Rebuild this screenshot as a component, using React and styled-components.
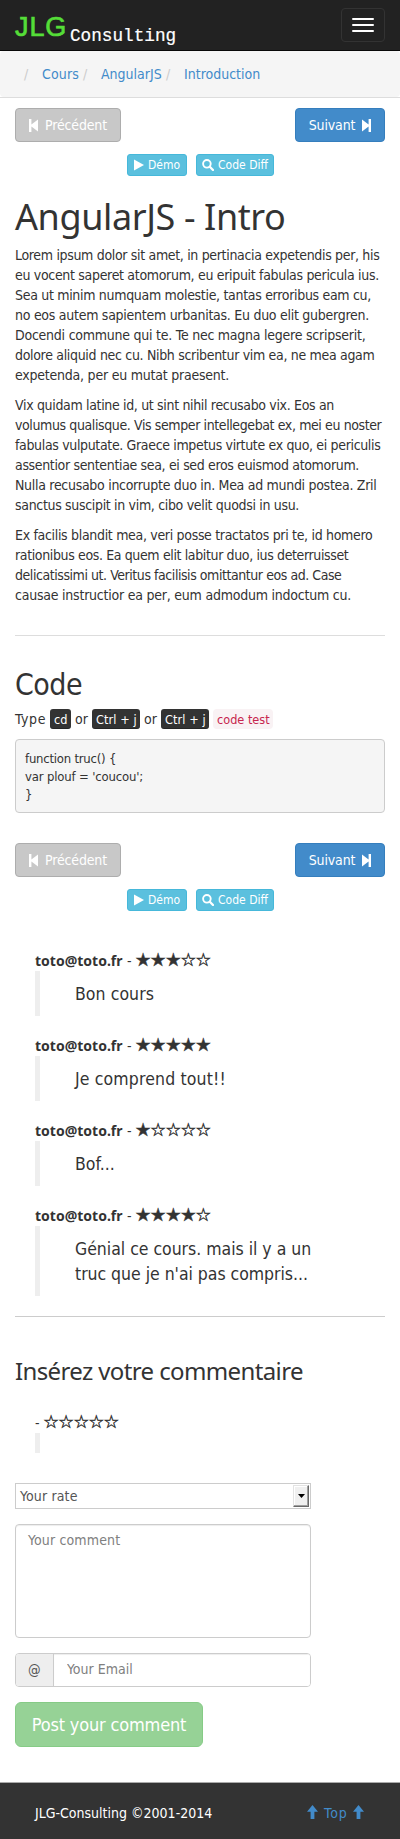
import React from 'react';
import styled, { createGlobalStyle } from 'styled-components';

const sans = '"DejaVu Sans Condensed", "DejaVu Sans", sans-serif';
const noto = '"Noto Sans", sans-serif';

const GlobalStyle = createGlobalStyle`
  *, *::before, *::after { box-sizing: border-box; }
  body { margin: 0; background: #fff; color: #333; font: 14px/20px ${sans}; }
  a { color: #428bca; text-decoration: none; }
  input, textarea, button { font: inherit; }
`;

const Text = styled.span`
  letter-spacing: ${p => p.$ls || 0}px;
  white-space: pre;
`;

const Navbar = styled.header`
  display: flex;
  justify-content: space-between;
  height: 51px;
  padding: 8px 15px 0;
  background: #222;
  border-bottom: 1px solid #080808;
`;

const Logo = styled.a`
  display: flex;
  align-items: flex-start;
  white-space: nowrap;
`;

const LogoName = styled.span`
  width: 55px;
  color: #55dd38;
  font: 27px/38px "Liberation Sans", sans-serif;
  letter-spacing: 0.9px;
  -webkit-text-stroke: 0.7px #55dd38;
`;

const LogoSuffix = styled.span`
  padding-top: 17px;
  color: #fff;
  font: 17.7px/22px "Liberation Mono", monospace;
  -webkit-text-stroke: 0.2px #fff;
`;

const Toggle = styled.button`
  display: flex;
  flex-direction: column;
  gap: 4px;
  width: 44px;
  height: 34px;
  padding: 9px 10px;
  background: transparent;
  border: 1px solid #333;
  border-radius: 4px;
`;

const ToggleBar = styled.span`
  width: 22px;
  height: 2px;
  background: #fff;
  border-radius: 1px;
`;

const BreadcrumbBar = styled.nav`
  height: 47px;
  border-bottom: 1px solid #ddd;
`;

const Breadcrumb = styled.ol`
  display: flex;
  height: 46px;
  margin: 0;
  padding: 13px 15px 0 24px;
  list-style: none;
  background: #f5f5f5;
  border-radius: 4px;
`;

const Crumb = styled.li`
  display: flex;
  width: ${p => p.$w}px;
  &::before { content: "/"; width: 18px; color: #ccc; }
`;

const Container = styled.main`
  padding: 10px 15px 0;
`;

const Pager = styled.div`
  display: flex;
  justify-content: space-between;
`;

const Button = styled.button`
  display: flex;
  align-items: center;
  justify-content: center;
  gap: ${p => p.$gap || 7}px;
  width: ${p => p.$w}px;
  height: ${p => p.$h || 34}px;
  padding: 0;
  color: #fff;
  font-size: ${p => p.$size || 14}px;
  line-height: 20px;
  background: ${p => p.$bg};
  border: 1px solid ${p => p.$line};
  border-radius: ${p => p.$r || 4}px;
`;

const Tools = styled.div`
  display: flex;
  justify-content: center;
  gap: 9px;
  padding: 12px 0 0 1px;
`;

const H1 = styled.h1`
  margin: 21px 0 8px;
  font: 400 36px/40px ${noto};
`;

const H2 = styled.h2`
  margin: 32px 0 7px;
  font: 400 30px/34px ${sans};
`;

const H3 = styled.h3`
  margin: 40px 0 0;
  font: 400 24px/28px ${noto};
`;

const Paragraph = styled.p`
  margin: 0 0 10px;
`;

const Line = styled(Text)`
  display: block;
`;

const Rule = styled.hr`
  height: 1px;
  margin: ${p => p.$top}px 0 0;
  border: 0;
  background: ${p => p.$color};
`;

const CodeRow = styled.div`
  display: flex;
  gap: 4px;
  height: 20px;
`;

const Word = styled(Text)`
  width: ${p => p.$w}px;
`;

const Kbd = styled.kbd`
  width: ${p => p.$w}px;
  padding-left: 4px;
  color: #fff;
  font: 12.6px/21px ${sans};
  letter-spacing: ${p => p.$ls || 0}px;
  white-space: nowrap;
  background: #333;
  border-radius: 3px;
  box-shadow: inset 0 -1px 0 rgba(0, 0, 0, 0.25);
`;

const Code = styled.code`
  width: 60px;
  padding-left: 4px;
  color: #c7254e;
  font: 12.6px/21px ${sans};
  white-space: nowrap;
  background: #f9f2f4;
  border-radius: 4px;
`;

const Pre = styled.pre`
  height: 74px;
  margin: 10px 0 30px;
  padding: 10px 9px 8px;
  font: 13px/18px ${sans};
  background: #f5f5f5;
  border: 1px solid #ccc;
  border-radius: 4px;
`;

const Comments = styled.section`
  display: flex;
  flex-direction: column;
  gap: 20px;
  padding: ${p => p.$top}px 0 0 20px;
`;

const CommentHead = styled.div`
  display: flex;
  height: 20px;
`;

const Author = styled.b`
  width: 92px;
  font: 700 14px/20px ${noto};
`;

const Stars = styled.span`
  padding-left: 1px;
  font: 18px/18px "DejaVu Sans", sans-serif;
  letter-spacing: -1.05px;
  -webkit-text-stroke: 0.4px #333;
`;

const Dash = styled.span`
  width: 7px;
`;

const Quote = styled.blockquote`
  min-height: 20px;
  margin: 0;
  padding: ${p => (p.$empty ? '0' : '11px 0 9px 35px')};
  font-size: 17.5px;
  line-height: 25px;
  border-left: 5px solid #eee;
`;

const Form = styled.form`
  display: flex;
  flex-direction: column;
  gap: 15px;
  width: 296px;
  padding-top: 30px;
`;

const Select = styled.div`
  display: flex;
  justify-content: space-between;
  height: 26px;
  padding: 1px 1px 1px 4px;
  color: #555;
  line-height: 22px;
  border: 1px solid #ccc;
`;

const SelectArrow = styled.span`
  display: flex;
  align-items: center;
  justify-content: center;
  width: 16px;
  height: 22px;
  background: #f0f0f0;
  border: 1px solid;
  border-color: #e3e3e3 #696969 #696969 #e3e3e3;
  box-shadow: inset -1px -1px 0 #a0a0a0, inset 1px 1px 0 #fff;
`;

const TextArea = styled.textarea`
  display: block;
  height: 114px;
  padding: 5px 12px;
  resize: none;
  border: 1px solid #ccc;
  border-radius: 4px;
  box-shadow: inset 0 1px 1px rgba(0, 0, 0, 0.075);
  letter-spacing: 0.15px;
  &::placeholder { color: #808080; }
`;

const InputGroup = styled.div`
  display: flex;
  height: 34px;
  border: 1px solid #ccc;
  border-radius: 4px;
  overflow: hidden;
`;

const Addon = styled.span`
  width: 38px;
  padding-left: 12px;
  color: #555;
  font-size: 14px;
  line-height: 33px;
  background: #eee;
  border-right: 1px solid #ccc;
`;

const Input = styled.input`
  flex: 1;
  min-width: 0;
  padding: 0 13px 3px;
  border: 0;
  box-shadow: inset 0 1px 1px rgba(0, 0, 0, 0.075);
  &::placeholder { color: #808080; }
`;

const Footer = styled.footer`
  display: flex;
  justify-content: space-between;
  height: 57px;
  margin-top: 35px;
  padding: 20px 36px 0 35px;
  color: #fff;
  background: #333;
  border-top: 1px solid #aaa;
`;

const TopLink = styled.a`
  display: flex;
  align-items: flex-start;
  gap: 6px;
  & > svg { margin-top: 2px; }
`;

const StepIcon = ({ flip }) => (
  <svg width="9" height="13" viewBox="0 0 9 13" fill="#fff" transform={flip ? 'scale(-1 1)' : undefined}>
    <path d="M0 0h2.4v5.6L9 0.4v12.2L2.4 7.4V13H0z" />
  </svg>
);

const PlayIcon = () => (
  <svg width="10" height="12" viewBox="0 0 10 12" fill="#fff"><path d="M0 0.5L10 6L0 11.5z" /></svg>
);

const SearchIcon = () => (
  <svg width="12" height="12" viewBox="0 0 12 12" fill="none" stroke="#fff">
    <circle cx="4.9" cy="4.8" r="3.8" strokeWidth="1.9" />
    <path d="M7.8 7.8L11 11" strokeWidth="2.3" strokeLinecap="round" />
  </svg>
);

const ArrowUp = () => (
  <svg width="11" height="14" viewBox="0 0 11 14" fill="#428bca"><path d="M5.5 0L11 6.8H7.4V14H3.6V6.8H0z" /></svg>
);

const Navigation = () => (
  <>
    <Pager>
      <Button $w={106} $bg="#c8c8c8" $line="#adadad"><StepIcon /><Text $ls={-0.15}>Précédent</Text></Button>
      <Button $w={90} $bg="#428bca" $line="#357ebd"><Text $ls={-0.15}>Suivant</Text><StepIcon flip /></Button>
    </Pager>
    <Tools>
      <Button $w={60} $h={22} $size={12} $r={3} $gap={4} $bg="#5bc0de" $line="#46b8da"><PlayIcon />Démo</Button>
      <Button $w={78} $h={22} $size={12} $r={3} $gap={4} $bg="#5bc0de" $line="#46b8da"><SearchIcon />Code Diff</Button>
    </Tools>
  </>
);

const Rating = ({ value }) => <Stars>{'★'.repeat(value) + '☆'.repeat(5 - value)}</Stars>;

const paragraphs = [
  [
    ['Lorem ipsum dolor sit amet, in pertinacia expetendis per, his', -0.33],
    ['eu vocent saperet atomorum, eu eripuit fabulas pericula ius.', -0.317],
    ['Sea ut minim numquam molestie, tantas erroribus eam cu,', -0.311],
    ['no eos autem sapientem urbanitas. Eu duo elit gubergren.', -0.269],
    ['Docendi commune qui te. Te nec magna legere scripserit,', -0.242],
    ['dolore aliquid nec cu. Nibh scribentur vim ea, ne mea agam', -0.321],
    ['expetenda, per eu mutat praesent.', -0.225],
  ],
  [
    ['Vix quidam latine id, ut sint nihil recusabo vix. Eos an', -0.337],
    ['volumus qualisque. Vis semper intellegebat ex, mei eu noster', -0.393],
    ['fabulas vulputate. Graece impetus virtute ex quo, ei periculis', -0.345],
    ['assentior sententiae sea, ei sed eros euismod atomorum.', -0.342],
    ['Nulla recusabo incorrupte duo in. Mea ad mundi postea. Zril', -0.297],
    ['sanctus suscipit in vim, cibo velit quodsi in usu.', -0.327],
  ],
  [
    ['Ex facilis blandit mea, veri posse tractatos pri te, id homero', -0.318],
    ['rationibus eos. Ea quem elit labitur duo, ius deterruisset', -0.369],
    ['delicatissimi ut. Veritus facilisis omittantur eos ad. Case', -0.442],
    ['causae instructior ea per, eum admodum indoctum cu.', -0.227],
  ],
];

const comments = [
  { rate: 3, lines: [['Bon cours', 0.07]] },
  { rate: 5, lines: [['Je comprend tout!!', 0.15]] },
  { rate: 1, lines: [['Bof...', 0]] },
  { rate: 4, lines: [['Génial ce cours. mais il y a un', -0.02], ["truc que je n'ai pas compris...", -0.03]] },
];

export default function App() {
  return (
    <>
      <GlobalStyle />
      <Navbar>
        <Logo href="#"><LogoName>JLG</LogoName><LogoSuffix>Consulting</LogoSuffix></Logo>
        <Toggle aria-label="Menu"><ToggleBar /><ToggleBar /><ToggleBar /></Toggle>
      </Navbar>
      <BreadcrumbBar>
        <Breadcrumb>
          <Crumb $w={59}><a href="#"><Text $ls={0.15}>Cours</Text></a></Crumb>
          <Crumb $w={83}><a href="#">AngularJS</a></Crumb>
          <Crumb $w={100}><a href="#">Introduction</a></Crumb>
        </Breadcrumb>
      </BreadcrumbBar>
      <Container>
        <Navigation />
        <H1><Text $ls={-0.4}>AngularJS - Intro</Text></H1>
        {paragraphs.map((lines, i) => (
          <Paragraph key={i}>
            {lines.map(([text, ls]) => <Line key={text} $ls={ls}>{text}</Line>)}
          </Paragraph>
        ))}
        <Rule $top={30} $color="#ddd" />
        <H2><Text $ls={-0.5}>Code</Text></H2>
        <CodeRow>
          <Word $w={31} $ls={0.57}>Type</Word>
          <Kbd $w={21}>cd</Kbd>
          <Word $w={13}>or</Word>
          <Kbd $w={48} $ls={0.1}>Ctrl + j</Kbd>
          <Word $w={13}>or</Word>
          <Kbd $w={48} $ls={0.1}>Ctrl + j</Kbd>
          <Code>code test</Code>
        </CodeRow>
        <Pre>
          <Line $ls={-0.23}>{'function truc() {'}</Line>
          <Line $ls={-0.17}>{"var plouf = 'coucou';"}</Line>
          <Line>{'}'}</Line>
        </Pre>
        <Navigation />
        <Comments $top={40}>
          {comments.map(({ rate, lines }, i) => (
            <article key={i}>
              <CommentHead><Author>toto@toto.fr</Author><Dash>-</Dash><Rating value={rate} /></CommentHead>
              <Quote>{lines.map(([text, ls]) => <Line key={text} $ls={ls}>{text}</Line>)}</Quote>
            </article>
          ))}
        </Comments>
        <Rule $top={20} $color="#ccc" />
        <H3><Text $ls={-0.62}>Insérez votre commentaire</Text></H3>
        <Comments $top={28}>
          <article>
            <CommentHead><Dash>-</Dash><Rating value={0} /></CommentHead>
            <Quote $empty />
          </article>
        </Comments>
        <Form>
          <Select><Text $ls={0.14}>Your rate</Text>
            <SelectArrow>
              <svg width="7" height="4" viewBox="0 0 7 4"><path d="M0 0h7L3.5 4z" /></svg>
            </SelectArrow>
          </Select>
          <TextArea placeholder="Your comment" />
          <InputGroup><Addon>@</Addon><Input placeholder="Your Email" /></InputGroup>
          <Button type="button" $w={188} $h={45} $size={18} $r={6} $bg="#96d296" $line="#86cb86">
            <Text $ls={-0.17}>Post your comment</Text>
          </Button>
        </Form>
      </Container>
      <Footer>
        <Text>JLG-Consulting ©2001-2014</Text>
        <TopLink href="#"><ArrowUp /><Word $w={23} $ls={0.9}>Top</Word><ArrowUp /></TopLink>
      </Footer>
    </>
  );
}
